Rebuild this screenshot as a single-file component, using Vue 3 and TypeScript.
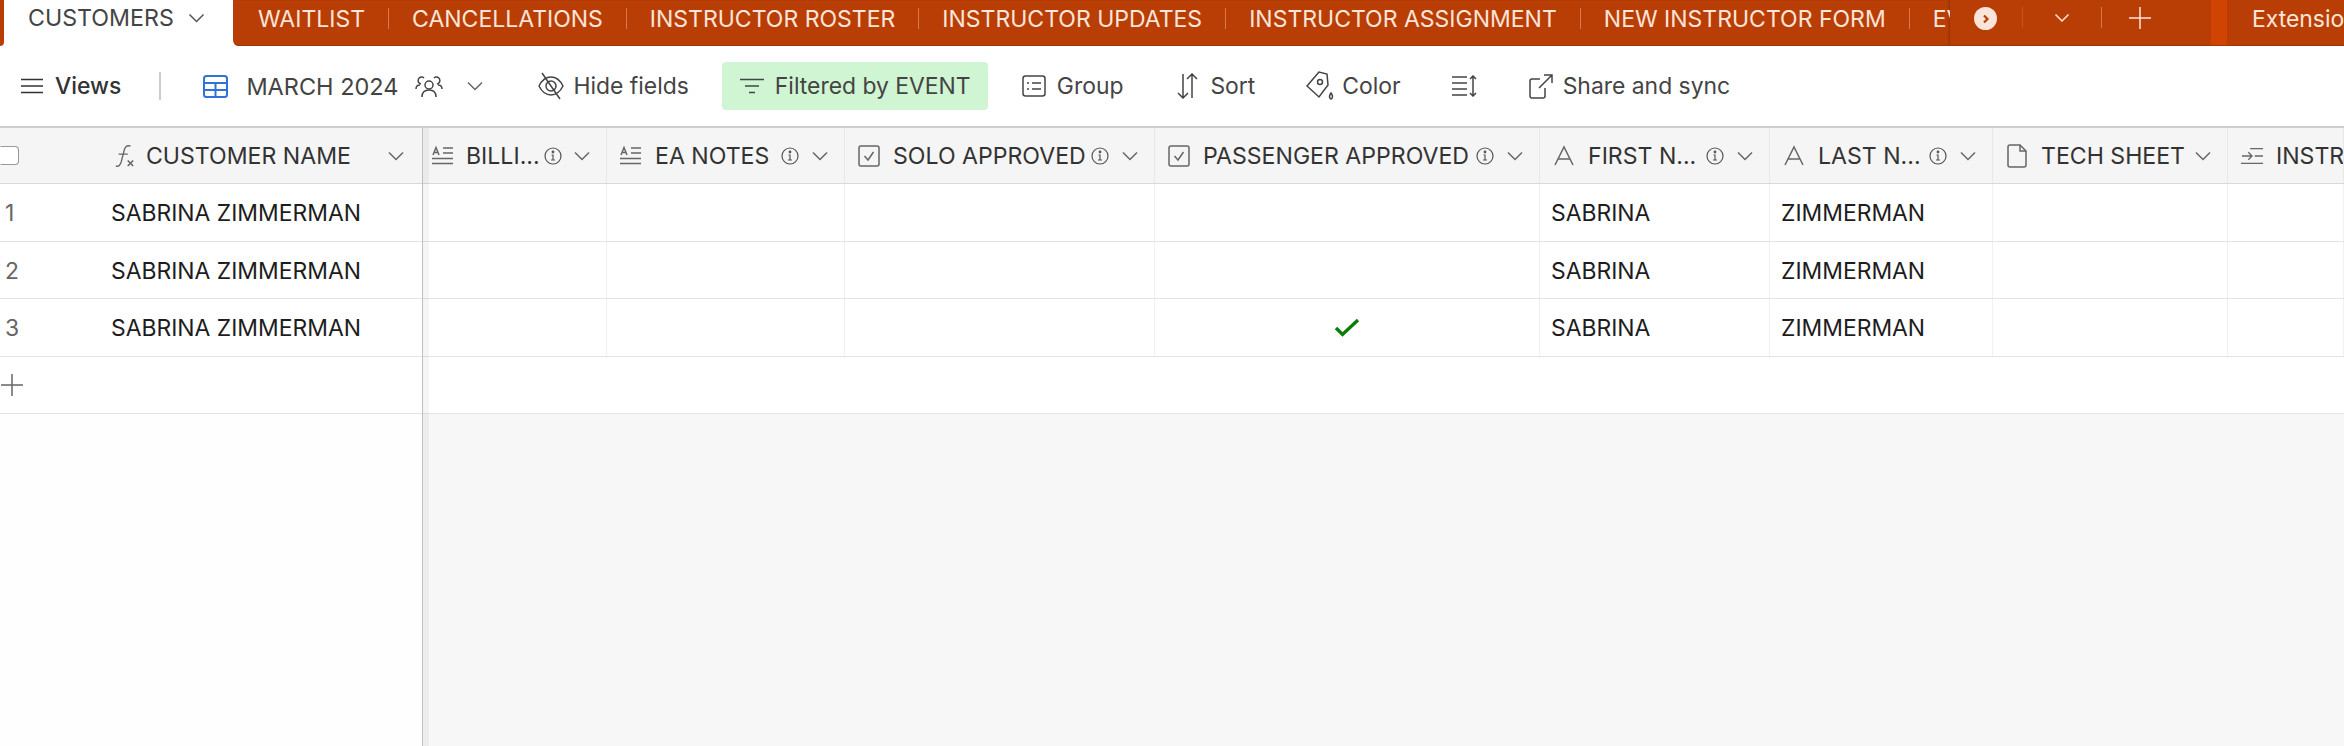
<script setup lang="ts">
interface Column {
  name: string;
  icon: string;
  width: number;
  info: boolean;
}

const tabs: string[] = [
  'WAITLIST',
  'CANCELLATIONS',
  'INSTRUCTOR ROSTER',
  'INSTRUCTOR UPDATES',
  'INSTRUCTOR ASSIGNMENT',
  'NEW INSTRUCTOR FORM',
  'EVENTS',
];

const columns: Column[] = [
  { name: 'BILLI...', icon: 'text', width: 184, info: true },
  { name: 'EA NOTES', icon: 'text', width: 238, info: true },
  { name: 'SOLO APPROVED', icon: 'check', width: 310, info: true },
  { name: 'PASSENGER APPROVED', icon: 'check', width: 385, info: true },
  { name: 'FIRST N...', icon: 'a', width: 230, info: true },
  { name: 'LAST N...', icon: 'a', width: 223, info: true },
  { name: 'TECH SHEET', icon: 'doc', width: 235, info: false },
  { name: 'INSTR', icon: 'lines', width: 116, info: false },
];

const rows = [
  { id: 1, approved: false },
  { id: 2, approved: false },
  { id: 3, approved: true },
];
</script>

<template>
  <div class="page">
    <header class="tabbar">
      <span class="edge"></span>
      <div class="active-tab">
        <span>CUSTOMERS</span>
        <svg class="chev-active" viewBox="0 0 16 10"><path d="M1 1.500 8 8.500l7-7" /></svg>
      </div>
      <div class="bar">
        <div class="tabs">
          <div v-for="t in tabs" :key="t" class="tab">{{ t }}</div>
        </div>
        <div class="tab-controls">
          <span class="next-btn">
            <svg viewBox="0 0 10 12"><path d="M3 2.500 6.500 6 3 9.500" /></svg>
          </span>
          <span class="ctl-chev">
            <svg viewBox="0 0 16 10"><path d="M1.500 1.500 8 8l6.500-6.500" /></svg>
          </span>
          <span class="ctl-plus">
            <svg viewBox="0 0 22 22"><path d="M11 0v22M0 11h22" /></svg>
          </span>
          <span class="strip"></span>
          <span class="extensions">Extensions</span>
        </div>
      </div>
    </header>

    <nav class="toolbar">
      <div class="tool views">
        <svg class="ic" viewBox="0 0 22 16"><path d="M0 1.500h22M0 8h22M0 14.500h22" /></svg>
        <b>Views</b>
      </div>
      <span class="tool-sep"></span>
      <div class="tool current">
        <svg class="grid-ic" viewBox="0 0 25 23">
          <rect x="1" y="1" width="23" height="21" rx="2.500" />
          <path d="M1 8h23M1 15h23M12.500 8v14" />
        </svg>
        <span class="view-name">MARCH 2024</span>
        <svg class="people" viewBox="0 0 28 24">
          <circle cx="14" cy="11" r="4" />
          <path d="M7 23c0-5 3-7 7-7s7 2 7 7M6 10a3.500 3.500 0 1 1 3-6M22 10a3.500 3.500 0 1 0-3-6M1 15c0-2 1-4 4-4M27 15c0-2-1-4-4-4" />
        </svg>
        <svg class="chev" viewBox="0 0 16 10"><path d="M1 1.500 8 8.500l7-7" /></svg>
      </div>
      <div class="tool hide">
        <svg class="ic-hide" viewBox="0 0 28 28">
          <path d="M2 14c3-6 7-9 12-9s9 3 12 9c-3 6-7 9-12 9s-9-3-12-9z" />
          <circle cx="14" cy="14" r="5" />
          <path d="M5 1l18 26" />
        </svg>
        <span>Hide fields</span>
      </div>
      <div class="filter">
        <svg class="ic-filter" viewBox="0 0 24 16"><path d="M0 1.500h24M5 8h14M9 14.500h6" /></svg>
        <span>Filtered by EVENT</span>
      </div>
      <div class="tool group">
        <svg class="ic-group" viewBox="0 0 24 24">
          <rect x="1" y="2" width="22" height="20" rx="2.500" />
          <path d="M5 9h2M10 9h9M5 15h2M10 15h9" />
        </svg>
        <span>Group</span>
      </div>
      <div class="tool sort">
        <svg class="ic-sort" viewBox="0 0 21 26"><path d="M6 1v24M1 20l5 5 5-5M15 25V1M10 6l5-5 5 5" /></svg>
        <span>Sort</span>
      </div>
      <div class="tool color">
        <svg class="ic-color" viewBox="0 0 28 30">
          <path d="M13 1 1 15l12 11 9-12-1-11z" />
          <circle cx="14" cy="11" r="2.500" />
          <path d="M25 22c2 3 2 5 0 6-2-1-2-3 0-6z" />
        </svg>
        <span>Color</span>
      </div>
      <div class="tool height">
        <svg class="ic-height" viewBox="0 0 26 22"><path d="M0 2h15M0 8h15M0 14h15M0 20h15M21 1v20M18 4l3-3 3 3M18 18l3 3 3-3" /></svg>
      </div>
      <div class="tool share">
        <svg class="ic-share" viewBox="0 0 24 25">
          <path d="M11 5H3a2 2 0 0 0-2 2v15a2 2 0 0 0 2 2h11a2 2 0 0 0 2-2v-8" />
          <path d="M10 14 23 1M15 1h8v8" />
        </svg>
        <span>Share and sync</span>
      </div>
    </nav>

    <main class="grid">
      <section class="left">
        <div class="h-row left-head">
          <span class="checkbox"></span>
          <svg class="fx" viewBox="0 0 22 26">
            <path d="M1 24c3 1 5-1 6-5l3-12c1-4 3-6 7-5M4 11h10" />
            <path class="fx-x" d="M14 18l6 6M20 18l-6 6" />
          </svg>
          <span class="h-name">CUSTOMER NAME</span>
          <svg class="chev" viewBox="0 0 16 10"><path d="M1 1.500 8 8.500l7-7" /></svg>
        </div>
        <div v-for="r in rows" :key="r.id" class="row left-row">
          <span class="num">{{ r.id }}</span>
          <span class="cell-text">SABRINA ZIMMERMAN</span>
        </div>
        <div class="row add-row">
          <svg class="plus" viewBox="0 0 22 22"><path d="M11 0v22M0 11h22" /></svg>
        </div>
      </section>

      <section class="right">
        <div class="h-row">
          <div
            v-for="c in columns"
            :key="c.name"
            class="h-cell"
            :style="{ flexBasis: c.width + 'px' }"
          >
            <svg v-if="c.icon === 'text'" class="fi" viewBox="0 0 22 22">
              <path d="M1 10 4 2.500 7 10M2 7.500h4" />
              <path d="M11 3h10M11 8h10M0 13.500h21M0 18.500h21" />
            </svg>
            <svg v-else-if="c.icon === 'check'" class="fi" viewBox="0 0 22 22">
              <rect x="1" y="1" width="20" height="20" rx="2" />
              <path d="M6.500 11 10 15l5.500-8" />
            </svg>
            <svg v-else-if="c.icon === 'a'" class="fi" viewBox="0 0 22 22">
              <path d="M2 20 11 2l9 18M5 14h12" />
            </svg>
            <svg v-else-if="c.icon === 'doc'" class="fi doc" viewBox="0 0 22 24">
              <path d="M2 3a2 2 0 0 1 2-2h10l6 6v14a2 2 0 0 1-2 2H4a2 2 0 0 1-2-2z" />
              <path d="M14 1v6h6" />
            </svg>
            <svg v-else class="fi" viewBox="0 0 24 22">
              <path d="M10 3h14M1 11h11M8 7l4 4-4 4M15 11h9M0 19h24" />
            </svg>
            <span class="h-name">{{ c.name }}</span>
            <svg v-if="c.info" class="info" viewBox="0 0 18 18">
              <circle cx="9" cy="9" r="8" />
              <path d="M7.500 8H9v5M7 13h4" />
              <circle class="dot" cx="9" cy="5" r="0.800" />
            </svg>
            <svg v-if="c.icon !== 'lines'" class="chev" viewBox="0 0 16 10"><path d="M1 1.500 8 8.500l7-7" /></svg>
          </div>
        </div>

        <div v-for="r in rows" :key="r.id" class="row">
          <div
            v-for="c in columns"
            :key="c.name"
            class="cell"
            :class="{ centered: c.name === 'PASSENGER APPROVED' }"
            :style="{ flexBasis: c.width + 'px' }"
          >
            <span v-if="c.icon === 'a'" class="cell-text">
              {{ c.name.startsWith('FIRST') ? 'SABRINA' : 'ZIMMERMAN' }}
            </span>
            <svg
              v-if="c.name === 'PASSENGER APPROVED' && r.approved"
              class="tick"
              viewBox="0 0 26 19"
            >
              <path d="M2 10 8.500 16.500 24 2" />
            </svg>
          </div>
        </div>
        <div class="row add-row"></div>
      </section>
    </main>
  </div>
</template>

<style scoped>
.page {
  width: 2344px;
  height: 746px;
  display: flex;
  flex-direction: column;
  overflow: hidden;
  background: #fff;
  font-family: Inter, "Liberation Sans", sans-serif;
  font-size: 22.9px;
  color: #333;
}
svg {
  flex: none;
  fill: none;
  stroke: currentColor;
  stroke-width: 1.5;
}

/* tab bar */
.tabbar {
  height: 46px;
  flex: none;
  display: flex;
  white-space: nowrap;
}
.edge {
  width: 4px;
  flex: none;
  background: #b93e05;
  border-bottom-right-radius: 5px;
}
.active-tab {
  flex: none;
  width: 229px;
  padding: 0 0 10px 24px;
  box-sizing: border-box;
  color: #444;
  font-size: 23.2px;
  display: flex;
  align-items: center;
  gap: 14px;
}
.chev-active {
  width: 17px;
  height: 10px;
  color: #555;
}
.bar {
  flex: 1;
  min-width: 0;
  display: flex;
  background: #b93e05;
  color: #fde5d9;
  border-bottom-left-radius: 6px;
  box-shadow: inset 0 -2px 1px -1px #a43604;
}
.tabs {
  width: 1717px;
  flex: none;
  padding-left: 2px;
  box-sizing: border-box;
  display: flex;
  overflow: hidden;
  box-shadow: inset -2px 0 2px -1px #8f3104;
}
.tab {
  flex: none;
  height: 21px;
  margin-top: 8px;
  padding: 0 23px;
  font-size: 23px;
  display: flex;
  align-items: center;
  border-right: 1px solid #d9784d;
}
.tab-controls {
  flex: 1;
  display: flex;
  min-width: 0;
  overflow: hidden;
  align-items: flex-start;
}
.tab-controls > * {
  flex: none;
}
.next-btn {
  width: 23px;
  height: 23px;
  margin: 7px 0 0 24px;
  border-radius: 50%;
  background: #fbe5da;
  color: #b93e05;
  display: flex;
  align-items: center;
  justify-content: center;
}
.next-btn svg {
  width: 10px;
  height: 12px;
  stroke-width: 2.2;
}
.ctl-chev {
  margin: 7px 0 0 25px;
  padding: 0 31px;
  height: 21px;
  display: flex;
  align-items: center;
  border-left: 1px solid #c45427;
  border-right: 1px solid #d9784d;
}
.ctl-chev svg {
  width: 16px;
  height: 10px;
}
.ctl-plus {
  margin: 7px 0 0 27px;
  display: flex;
}
.ctl-plus svg {
  width: 22px;
  height: 22px;
}
.strip {
  width: 16px;
  height: 45px;
  margin-left: 60px;
  background: #d14302;
}
.extensions {
  margin: 5px 0 0 25px;
}

/* toolbar */
.toolbar {
  height: 80px;
  flex: none;
  padding-left: 21px;
  box-sizing: border-box;
  display: flex;
  align-items: center;
  color: #444;
  white-space: nowrap;
}
.tool {
  display: flex;
  align-items: center;
}
.views {
  gap: 12px;
  color: #333;
}
.views b {
  font-weight: 500;
}
.ic {
  width: 22px;
  height: 16px;
}
.tool-sep {
  width: 2px;
  height: 28px;
  margin: 0 42px 0 38px;
  background: #ccc;
}
.grid-ic {
  width: 25px;
  height: 23px;
  color: #2f73d8;
  stroke-width: 2;
}
.view-name {
  margin-left: 18px;
  font-size: 23.5px;
}
.people {
  width: 28px;
  height: 24px;
  margin-left: 17px;
}
.current .chev {
  margin-left: 24px;
}
.hide {
  margin-left: 54px;
  gap: 8px;
}
.ic-hide {
  width: 28px;
  height: 28px;
}
.filter {
  width: 266px;
  height: 48px;
  margin-left: 33px;
  padding-left: 18px;
  box-sizing: border-box;
  border-radius: 4px;
  background: #d0f5d3;
  display: flex;
  align-items: center;
  gap: 11px;
}
.ic-filter {
  width: 24px;
  height: 16px;
}
.group {
  margin-left: 34px;
  gap: 11px;
}
.ic-group {
  width: 24px;
  height: 24px;
}
.sort {
  margin-left: 54px;
  gap: 12px;
}
.ic-sort {
  width: 21px;
  height: 26px;
}
.color {
  margin-left: 51px;
  gap: 8px;
}
.ic-color {
  width: 28px;
  height: 30px;
}
.height {
  margin-left: 51px;
}
.ic-height {
  width: 26px;
  height: 22px;
}
.share {
  margin-left: 51px;
  gap: 10px;
}
.ic-share {
  width: 24px;
  height: 25px;
}

/* grid */
.grid {
  flex: 1;
  min-height: 0;
  display: flex;
  border-top: 2px solid #cfcfcf;
}
.left {
  width: 423px;
  flex: none;
  box-sizing: border-box;
  background: #fefefe;
  border-right: 1px solid #c8c8c8;
  position: relative;
  z-index: 1;
}
.left::after {
  content: "";
  position: absolute;
  top: 0;
  bottom: 0;
  left: 100%;
  width: 7px;
  background: rgba(0, 0, 0, 0.04);
}
.right {
  flex: 1;
  min-width: 0;
  background: #f7f7f7;
  overflow: hidden;
}
.h-row {
  height: 56px;
  display: flex;
  box-sizing: border-box;
  background: #f5f5f5;
  border-bottom: 1px solid #d9d9d9;
  color: #333;
}
.left-head {
  align-items: center;
  padding-right: 18px;
}
.checkbox {
  width: 19px;
  height: 19px;
  flex: none;
  box-sizing: border-box;
  border: 1px solid #999;
  border-left-color: transparent;
  border-radius: 0 4px 4px 0;
  background: #fff;
  margin-right: 96px;
}
.fx {
  width: 20px;
  height: 24px;
  margin-right: 11px;
  color: #666;
}
.fx-x {
  stroke-width: 1.8;
}
.h-name {
  flex: 1;
  min-width: 0;
  white-space: nowrap;
  font-size: 23.1px;
}
.chev {
  width: 16px;
  height: 10px;
  color: #666;
}
.h-cell {
  flex: 0 0 auto;
  box-sizing: border-box;
  padding: 0 16px 0 13px;
  display: flex;
  align-items: center;
  gap: 13px;
  border-right: 1px solid #e8e8e8;
  overflow: hidden;
}
.h-cell:first-child {
  padding-left: 9px;
  gap: 12px;
}
.fi {
  width: 22px;
  height: 22px;
  color: #666;
}
.doc {
  height: 24px;
}
.info {
  width: 18px;
  height: 18px;
  color: #555;
  stroke-width: 1.2;
}
.dot {
  fill: currentColor;
}
.row {
  height: 57.5px;
  box-sizing: border-box;
  display: flex;
  background: #fff;
  border-bottom: 1px solid #e3e3e3;
}
.left-row {
  align-items: center;
}
.num {
  width: 111px;
  flex: none;
  padding: 2px 0 0 5px;
  box-sizing: border-box;
  color: #666;
}
.cell-text {
  padding-top: 2px;
  color: #1d1d1d;
  white-space: nowrap;
}
.cell {
  flex: 0 0 auto;
  box-sizing: border-box;
  padding-left: 11px;
  display: flex;
  align-items: center;
  border-right: 1px solid #f0f0f0;
}
.centered {
  justify-content: center;
  padding-left: 0;
}
.tick {
  width: 26px;
  height: 19px;
  color: #0a7d0a;
  stroke-width: 3.4;
}
.add-row {
  align-items: center;
}
.plus {
  width: 22px;
  height: 22px;
  margin-left: 1px;
  color: #666;
}
</style>

<style>
html,
body {
  margin: 0;
  background: #fff;
}
</style>
